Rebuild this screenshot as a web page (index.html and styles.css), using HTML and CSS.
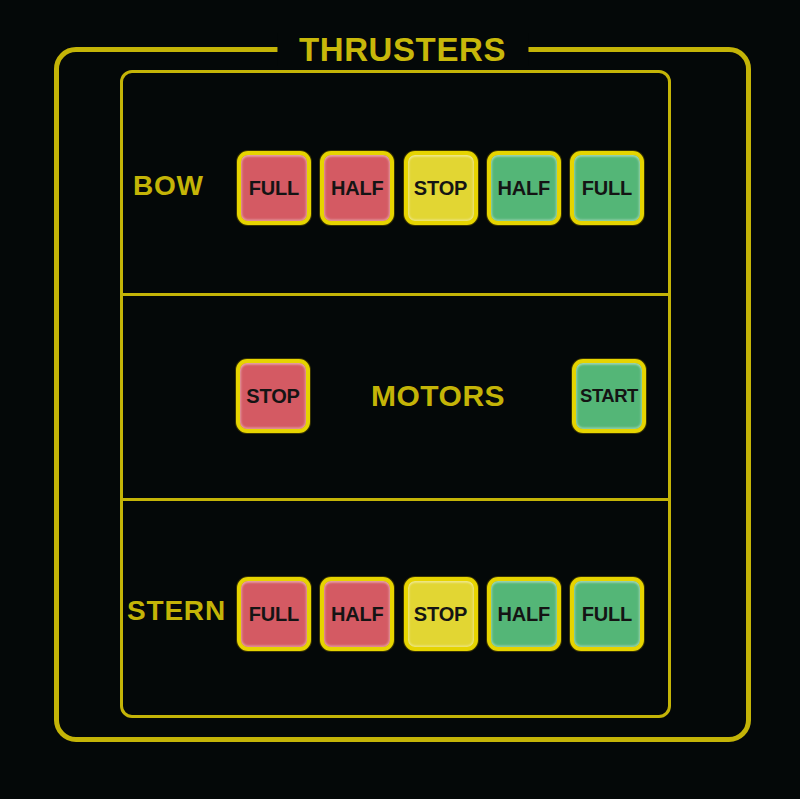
FILE: index.html
```html
<!DOCTYPE html>
<html lang="en">
<head>
<meta charset="utf-8">
<title>Thrusters</title>
<link rel="stylesheet" href="styles.css">
</head>
<body>
<div class="panel">
  <div class="outer">
    <div class="title">THRUSTERS</div>
    <div class="inner">
      <section class="sec sec-bow">
        <div class="label label-bow">BOW</div>
        <div class="btns">
          <div class="btn red">FULL</div>
          <div class="btn red">HALF</div>
          <div class="btn yellow">STOP</div>
          <div class="btn green">HALF</div>
          <div class="btn green">FULL</div>
        </div>
      </section>
      <section class="sec sec-motors">
        <div class="btn red">STOP</div>
        <div class="motors">MOTORS</div>
        <div class="btn green btn-small">START</div>
      </section>
      <section class="sec sec-stern">
        <div class="label label-stern">STERN</div>
        <div class="btns">
          <div class="btn red">FULL</div>
          <div class="btn red">HALF</div>
          <div class="btn yellow">STOP</div>
          <div class="btn green">HALF</div>
          <div class="btn green">FULL</div>
        </div>
      </section>
    </div>
  </div>
</div>
</body>
</html>
```
FILE: styles.css
```css
html, body {
  margin: 0;
  padding: 0;
  background: #040707;
}
.panel {
  width: 800px;
  height: 799px;
  box-sizing: border-box;
  padding: 47px 0 0 54px;
  background: #040808;
  font-family: "Liberation Sans", Arial, sans-serif;
}
.outer {
  position: relative;
  width: 697px;
  height: 695px;
  box-sizing: border-box;
  border: 5px solid #c4b407;
  border-radius: 22px;
  padding: 18px 75px 19px 61px;
}
.title {
  position: absolute;
  top: -19px;
  left: 50%;
  transform: translateX(-50%);
  background: #040808;
  padding: 0 22px;
  font-size: 33px;
  line-height: 33px;
  font-weight: bold;
  color: #c8b80a;
  letter-spacing: 0.6px;
  white-space: nowrap;
}
.inner {
  width: 551px;
  height: 648px;
  box-sizing: border-box;
  border: 3px solid #c4b407;
  border-radius: 12px;
  display: flex;
  flex-direction: column;
}
.sec {
  box-sizing: border-box;
  display: flex;
  align-items: flex-start;
}
.sec-bow {
  height: 220px;
  padding-top: 78px;
}
.sec-motors {
  height: 208px;
  border-top: 3px solid #c4b407;
  border-bottom: 3px solid #c4b407;
  padding: 63px 22px 0 113px;
  justify-content: space-between;
}
.sec-stern {
  height: 214px;
  padding-top: 76px;
}
.label {
  width: 114px;
  box-sizing: border-box;
  color: #c4b407;
  font-size: 28px;
  font-weight: bold;
  letter-spacing: 0.8px;
  line-height: 74px;
  height: 74px;
}
.label-bow {
  padding-left: 10px;
  margin-top: -2px;
}
.label-stern {
  padding-left: 4px;
  margin-top: -3px;
}
.btns {
  display: flex;
  gap: 9.25px;
}
.btn {
  width: 74px;
  height: 74px;
  box-sizing: border-box;
  border: 4px solid #e6d400;
  border-radius: 11px;
  display: flex;
  align-items: center;
  justify-content: center;
  font-size: 20px;
  font-weight: bold;
  color: #141414;
  letter-spacing: -0.2px;
  box-shadow: 0 0 0 1px #3a3400, inset 0 2px 2px rgba(255,255,255,0.35), inset 0 -2px 2px rgba(255,255,255,0.25), inset 2px 0 2px rgba(255,255,255,0.15), inset -2px 0 2px rgba(255,255,255,0.15);
}
.btn-small {
  font-size: 18.5px;
  letter-spacing: -0.5px;
}
.red {
  background: #d45a63;
}
.yellow {
  background: #e2d633;
}
.green {
  background: #54b677;
}
.motors {
  color: #c4b407;
  font-size: 30px;
  font-weight: bold;
  letter-spacing: 0.5px;
  line-height: 74px;
  height: 74px;
  margin-left: -6px;
}
```
